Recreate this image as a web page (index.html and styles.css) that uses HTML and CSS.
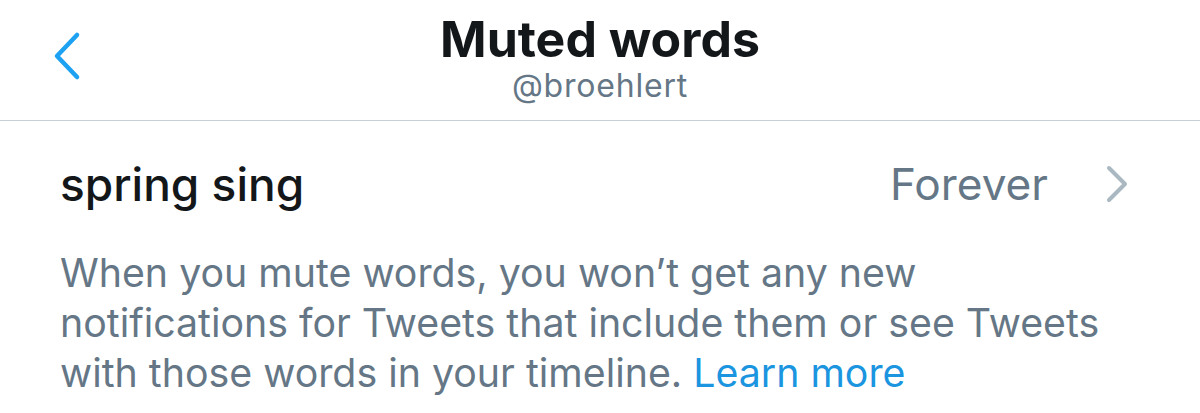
FILE: index.html
```html
<!DOCTYPE html>
<html lang="en">
<head>
  <meta charset="UTF-8" />
  <meta name="viewport" content="width=device-width, initial-scale=1.0"/>
  <title>Muted words</title>
  <link rel="stylesheet" href="styles.css">
</head>
<body>

  <!-- Nav bar -->
  <div class="nav-bar">
    <a class="back-button" href="#">
      <svg width="34" height="54" viewBox="0 0 34 54">
        <polyline points="27,5 7,26 27,47" fill="none" stroke="#1da1f2" stroke-width="4.5" stroke-linecap="round" stroke-linejoin="round"/>
      </svg>
    </a>
    <div class="nav-title">
      <div class="title">Muted words</div>
      <div class="subtitle">@broehlert</div>
    </div>
  </div>

  <!-- Muted word row -->
  <div class="word-row">
    <span class="word">spring sing</span>
    <span class="duration">Forever</span>
    <svg class="disclosure" width="26" height="40" viewBox="0 0 26 40">
      <polyline points="5,4 21,20 5,36" fill="none" stroke="#aab8c2" stroke-width="4" stroke-linecap="round" stroke-linejoin="round"/>
    </svg>
  </div>

  <!-- Footer note -->
  <p class="note">
    When you mute words, you won’t get any new<br>
    notifications for Tweets that include them or see Tweets<br>
    with those words in your timeline. <a href="#" class="learn-more">Learn more</a>
  </p>

</body>
</html>
```

FILE: styles.css
```css
body {
  margin: 0;
  background: white;
  font-family: Inter, "Noto Sans", sans-serif;
  overflow: hidden;
}

.nav-bar {
  position: relative;
  height: 120px;
  border-bottom: 1px solid #c8d0d7;
  display: flex;
  justify-content: center;
}

.back-button {
  position: absolute;
  left: 50px;
  top: 30px;
}

.nav-title {
  text-align: center;
  padding-top: 11px;
}

.title {
  font-size: 50px;
  font-weight: 700;
  color: #14171a;
  line-height: 56px;
}

.subtitle {
  font-size: 32px;
  letter-spacing: 0.8px;
  color: #657786;
  line-height: 38px;
}

.word-row {
  display: flex;
  align-items: center;
  padding: 0 70px 0 60px;
  height: 125px;
}

.word {
  flex: 1;
  font-size: 46px;
  font-weight: 500;
  color: #14171a;
}

.duration {
  font-size: 44.2px;
  color: #657786;
  margin-right: 56px;
}

.disclosure {
  display: block;
}

.note {
  margin: 0;
  padding: 2px 60px 0;
  font-size: 39.3px;
  line-height: 50px;
  color: #657786;
}

.learn-more {
  color: #1b95e0;
  text-decoration: none;
}
```
